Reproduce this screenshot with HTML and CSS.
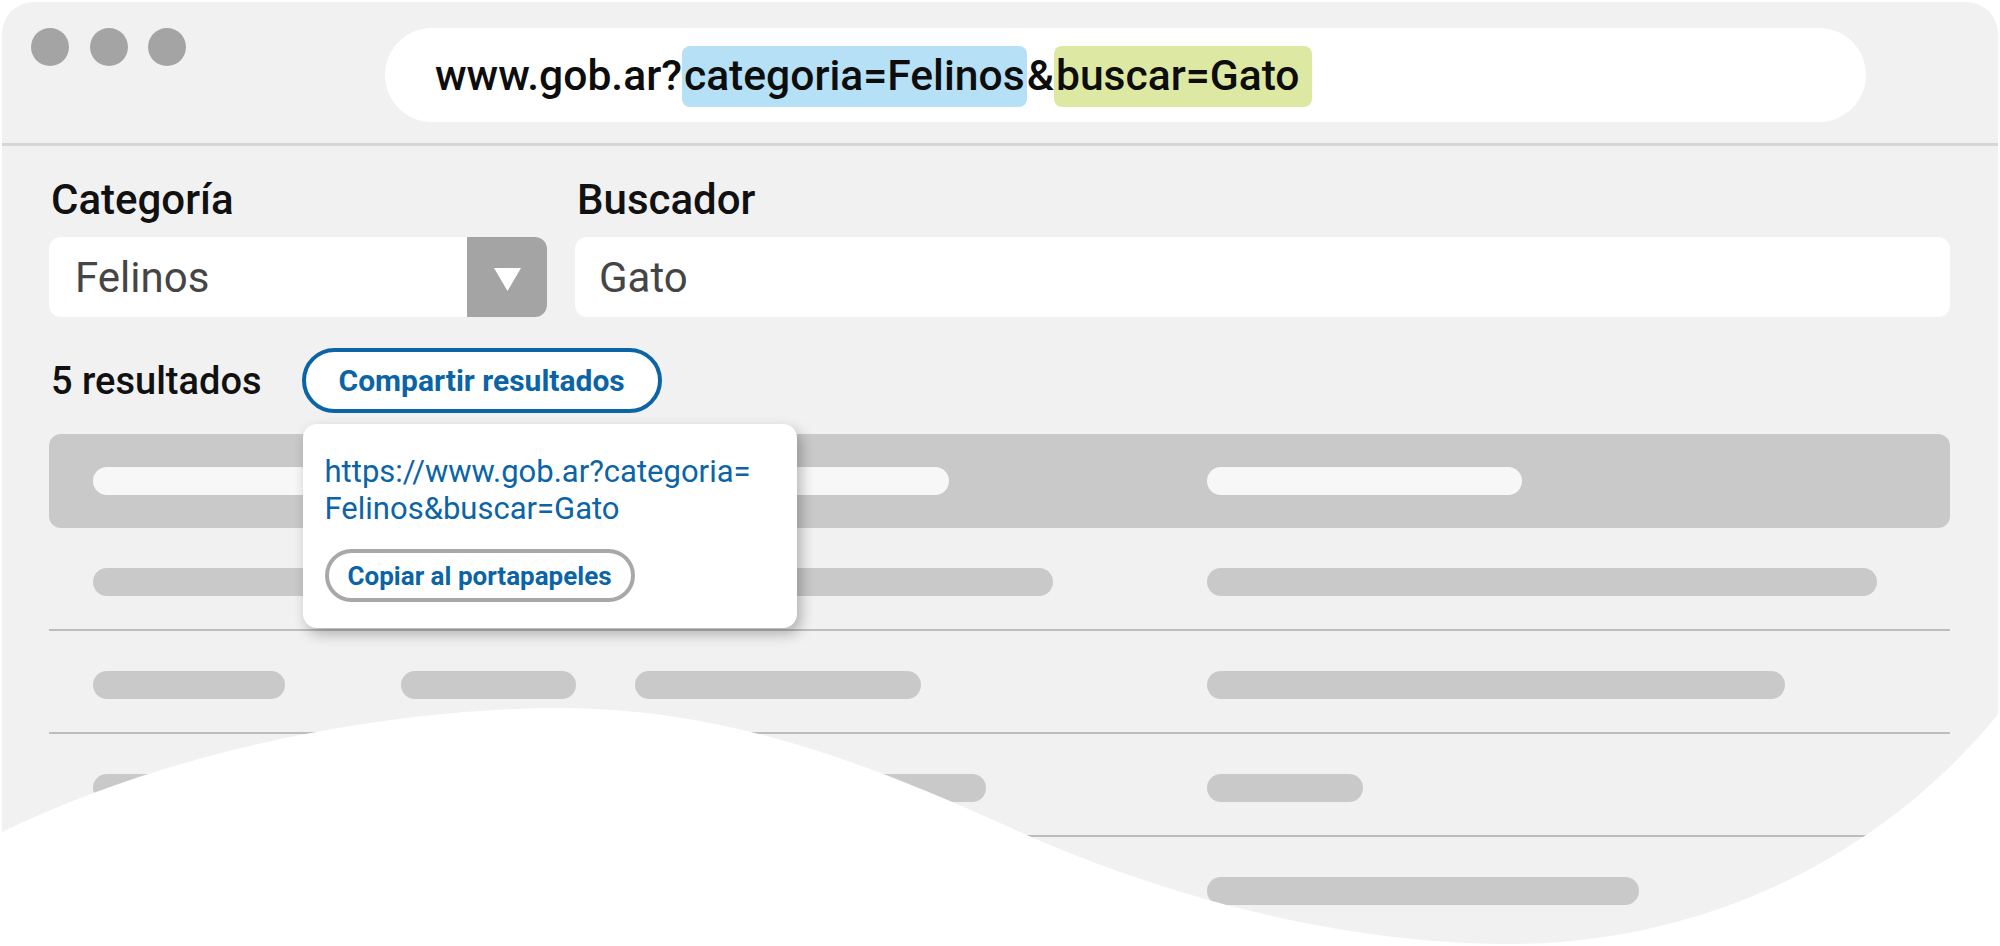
FILE: index.html
```html
<!DOCTYPE html>
<html lang="es">
<head>
<meta charset="utf-8">
<title>Compartir resultados</title>
<link rel="stylesheet" href="styles.css">
</head>
<body>
<div class="window">
  <header class="topbar">
    <div class="dots"><span class="dot"></span><span class="dot"></span><span class="dot"></span></div>
    <div class="urlbar"><span class="url">www.gob.ar?<span class="hl hl-blue">categoria=Felinos</span>&amp;<span class="hl hl-green">buscar=Gato</span></span></div>
  </header>
  <main class="content">
    <div class="filters">
      <div class="field field-cat">
        <div class="label">Categoría</div>
        <div class="select">
          <span class="select-value">Felinos</span>
          <span class="select-arrow"><svg width="27" height="23" viewBox="0 0 27 23"><polygon points="0,0 27,0 13.5,23" fill="#fff"/></svg></span>
        </div>
      </div>
      <div class="field field-search">
        <div class="label">Buscador</div>
        <div class="input">Gato</div>
      </div>
    </div>
    <div class="results">
      <span class="count">5 resultados</span>
      <div class="share">
        <button class="btn-share">Compartir resultados</button>
        <div class="popover">
          <p class="share-url">https://www.gob.ar?categoria=<br>Felinos&amp;buscar=Gato</p>
          <button class="btn-copy">Copiar al portapapeles</button>
        </div>
      </div>
    </div>
    <div class="table">
      <div class="thead grid">
        <span class="bar bar-light" style="width:230px"></span>
        <span></span>
        <span class="bar bar-light" style="width:314px"></span>
        <span class="bar bar-light" style="width:315px"></span>
      </div>
      <div class="trow grid">
        <span class="bar" style="width:230px"></span>
        <span></span>
        <span class="bar" style="width:418px"></span>
        <span class="bar" style="width:670px"></span>
      </div>
      <div class="trow grid">
        <span class="bar" style="width:192px"></span>
        <span class="bar" style="width:175px"></span>
        <span class="bar" style="width:286px"></span>
        <span class="bar" style="width:578px"></span>
      </div>
      <div class="trow grid">
        <span class="bar" style="width:210px"></span>
        <span class="bar" style="width:150px"></span>
        <span class="bar" style="width:351px"></span>
        <span class="bar" style="width:156px"></span>
      </div>
      <div class="trow grid trow-last">
        <span class="bar" style="width:180px"></span>
        <span class="bar" style="width:160px"></span>
        <span class="bar" style="width:300px"></span>
        <span class="bar" style="width:432px"></span>
      </div>
    </div>
  </main>
</div>
<svg class="wave" width="2000" height="946" viewBox="0 0 2000 946" aria-hidden="true">
  <path d="M0,833 C180,745 400,708 561,708 C720,708 860,760 1000,823 C1200,915 1380,944 1510,944 C1700,944 1880,860 2000,712 L2000,946 L0,946 Z" fill="#fff"/>
</svg>
</body>
</html>
```

FILE: styles.css
```css
* { box-sizing: border-box; }

html, body {
  margin: 0;
  padding: 0;
}

body {
  position: relative;
  width: 2000px;
  height: 946px;
  overflow: hidden;
  background: #ffffff;
  font-family: Roboto, "Liberation Sans", sans-serif;
  color: #111;
}

.window {
  margin: 2px 2px 0 2px;
  height: 944px;
  background: #f1f1f1;
  border-radius: 32px 32px 0 0;
}

/* ---------- top bar ---------- */
.topbar {
  display: flex;
  align-items: flex-start;
  padding: 26px 0 21px 29px;
  border-bottom: 3px solid #d6d6d6;
}

.dots {
  display: flex;
  gap: 20.5px;
}

.dot {
  width: 38px;
  height: 38px;
  border-radius: 50%;
  background: #a4a4a4;
}

.urlbar {
  margin-left: 199px;
  width: 1481px;
  height: 94px;
  border-radius: 47px;
  background: #ffffff;
  display: flex;
  align-items: center;
  padding-left: 50px;
}

.url {
  font-size: 42.6px;
  font-weight: 500;
  color: #0d0d0d;
  white-space: nowrap;
}

.hl {
  padding: 4px 2px 7px 2px;
  border-radius: 8px;
}

.hl-blue { background: #b6e0f6; }
.hl-green { background: #dde9a2; padding-right: 12px; }

/* ---------- content ---------- */
.content {
  padding: 0 48px 0 47px;
}

.filters {
  display: flex;
  gap: 28px;
  margin-top: 30px;
}

.field-cat { width: 498px; flex: none; }
.field-search { flex: 1; }

.label {
  font-size: 42px;
  font-weight: 500;
  line-height: 48px;
  margin-bottom: 13px;
  padding-left: 2px;
  color: #111;
}

.select {
  height: 80px;
  display: flex;
  background: #ffffff;
  border-radius: 12px;
  overflow: hidden;
}

.select-value {
  flex: 1;
  display: flex;
  align-items: center;
  padding-left: 26px;
  font-size: 42px;
  color: #454545;
}

.select-arrow {
  width: 80px;
  background: #a4a4a4;
  display: flex;
  align-items: center;
  justify-content: center;
  padding-top: 4px;
}

.input {
  height: 80px;
  display: flex;
  align-items: center;
  padding-left: 24px;
  background: #ffffff;
  border-radius: 12px;
  font-size: 42px;
  color: #454545;
}

/* ---------- results ---------- */
.results {
  display: flex;
  align-items: center;
  margin-top: 31px;
  gap: 40px;
}

.count {
  font-size: 38px;
  font-weight: 500;
  padding-left: 2px;
  color: #111;
}

.share {
  position: relative;
}

.btn-share {
  display: block;
  height: 65px;
  padding: 0 33px;
  border: 4px solid #0b64a6;
  border-radius: 33px;
  background: #ffffff;
  font-family: Roboto, "Liberation Sans", sans-serif;
  font-size: 30px;
  font-weight: 700;
  color: #0b64a6;
}

.popover {
  position: absolute;
  z-index: 2;
  left: 1px;
  top: calc(100% + 11px);
  width: 494px;
  padding: 29px 20px 26px 22px;
  background: #ffffff;
  border-radius: 14px;
  box-shadow: 4px 6px 14px rgba(0, 0, 0, 0.28);
}

.share-url {
  margin: 0 0 22px 0;
  font-size: 31px;
  line-height: 37px;
  color: #0b64a6;
  white-space: nowrap;
}

.btn-copy {
  display: block;
  height: 53px;
  padding: 0 19px;
  border: 4px solid #a8a8a8;
  border-radius: 27px;
  background: #ffffff;
  font-family: Roboto, "Liberation Sans", sans-serif;
  font-size: 26px;
  font-weight: 700;
  color: #0b64a6;
}

/* ---------- table ---------- */
.table {
  margin-top: 21px;
}

.grid {
  display: grid;
  grid-template-columns: 308px 234px 572px 1fr;
  align-items: center;
  padding: 0 44px;
}

.thead {
  height: 94px;
  background: #c9c9c9;
  border-radius: 12px;
}

.trow {
  padding-top: 40px;
  padding-bottom: 33px;
  border-bottom: 2px solid #bdbdbd;
}

.trow-last {
  border-bottom: none;
}

.bar {
  display: block;
  height: 28px;
  border-radius: 14px;
  background: #c9c9c9;
}

.bar-light {
  background: #f7f7f7;
}

/* ---------- decorative wave ---------- */
.wave {
  position: absolute;
  left: 0;
  top: 0;
  pointer-events: none;
  z-index: 5;
}
```
